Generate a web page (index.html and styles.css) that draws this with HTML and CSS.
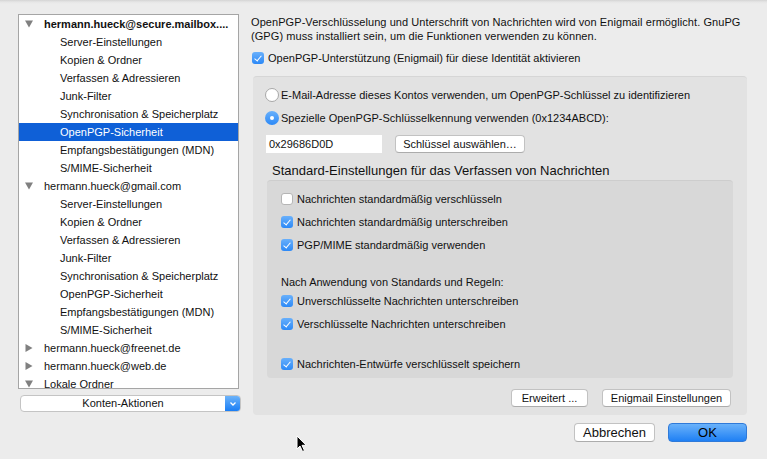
FILE: index.html
```html
<!DOCTYPE html>
<html lang="de">
<head>
<meta charset="utf-8">
<title>Konten-Einstellungen</title>
<link rel="stylesheet" href="styles.css">
</head>
<body>
<div class="window">
  <div class="left">
    <div class="tree">
      <div class="row acct bold"><span class="tri"><svg width="8" height="8" viewBox="0 0 8 8"><path d="M0 0.5 H8 L4 7.5 Z" fill="#808080"/></svg></span>hermann.hueck@secure.mailbox....</div>
      <div class="row sub">Server-Einstellungen</div>
      <div class="row sub">Kopien &amp; Ordner</div>
      <div class="row sub">Verfassen &amp; Adressieren</div>
      <div class="row sub">Junk-Filter</div>
      <div class="row sub">Synchronisation &amp; Speicherplatz</div>
      <div class="row sub sel">OpenPGP-Sicherheit</div>
      <div class="row sub">Empfangsbestätigungen (MDN)</div>
      <div class="row sub">S/MIME-Sicherheit</div>
      <div class="row acct"><span class="tri"><svg width="8" height="8" viewBox="0 0 8 8"><path d="M0 0.5 H8 L4 7.5 Z" fill="#808080"/></svg></span>hermann.hueck@gmail.com</div>
      <div class="row sub">Server-Einstellungen</div>
      <div class="row sub">Kopien &amp; Ordner</div>
      <div class="row sub">Verfassen &amp; Adressieren</div>
      <div class="row sub">Junk-Filter</div>
      <div class="row sub">Synchronisation &amp; Speicherplatz</div>
      <div class="row sub">OpenPGP-Sicherheit</div>
      <div class="row sub">Empfangsbestätigungen (MDN)</div>
      <div class="row sub">S/MIME-Sicherheit</div>
      <div class="row acct"><span class="tri"><svg width="8" height="8" viewBox="0 0 8 8"><path d="M0.5 0 V8 L7.5 4 Z" fill="#808080"/></svg></span>hermann.hueck@freenet.de</div>
      <div class="row acct"><span class="tri"><svg width="8" height="8" viewBox="0 0 8 8"><path d="M0.5 0 V8 L7.5 4 Z" fill="#808080"/></svg></span>hermann.hueck@web.de</div>
      <div class="row acct"><span class="tri"><svg width="8" height="8" viewBox="0 0 8 8"><path d="M0 0.5 H8 L4 7.5 Z" fill="#808080"/></svg></span>Lokale Ordner</div>
    </div>
    <div class="popup">
      <span class="popup-label">Konten-Aktionen</span>
      <span class="popup-arrow"><svg width="8" height="6" viewBox="0 0 8 6"><path d="M1.5 1.5 L4 4 L6.5 1.5" fill="none" stroke="#fff" stroke-width="1.3"/></svg></span>
    </div>
  </div>

  <div class="right">
    <p class="desc">OpenPGP-Verschlüsselung und Unterschrift von Nachrichten wird von Enigmail ermöglicht. GnuPG (GPG) muss installiert sein, um die Funktionen verwenden zu können.</p>
    <div class="check-row top-check"><span class="cb on"></span>OpenPGP-Unterstützung (Enigmail) für diese Identität aktivieren</div>

    <div class="outer">
      <div class="radio-row r1"><span class="radio"></span>E-Mail-Adresse dieses Kontos verwenden, um OpenPGP-Schlüssel zu identifizieren</div>
      <div class="radio-row r2"><span class="radio on"></span>Spezielle OpenPGP-Schlüsselkennung verwenden (0x1234ABCD):</div>
      <div class="key-row">
        <div class="input">0x29686D0D</div>
        <div class="btn">Schlüssel auswählen…</div>
      </div>
      <div class="section-title">Standard-Einstellungen für das Verfassen von Nachrichten</div>
      <div class="inner">
        <div class="check-row c1"><span class="cb"></span>Nachrichten standardmäßig verschlüsseln</div>
        <div class="check-row c2"><span class="cb on"></span>Nachrichten standardmäßig unterschreiben</div>
        <div class="check-row c2"><span class="cb on"></span>PGP/MIME standardmäßig verwenden</div>
        <div class="label-row">Nach Anwendung von Standards und Regeln:</div>
        <div class="check-row c3"><span class="cb on"></span>Unverschlüsselte Nachrichten unterschreiben</div>
        <div class="check-row c2"><span class="cb on"></span>Verschlüsselte Nachrichten unterschreiben</div>
        <div class="check-row c4"><span class="cb on"></span>Nachrichten-Entwürfe verschlüsselt speichern</div>
      </div>
      <div class="btn-row">
        <div class="btn b-erw">Erweitert ...</div>
        <div class="btn b-enig">Enigmail Einstellungen</div>
      </div>
    </div>

    <div class="dialog-row">
      <div class="btn dbtn">Abbrechen</div>
      <div class="btn dbtn ok">OK</div>
    </div>
  </div>
</div>
<svg class="cursor" width="12" height="18" viewBox="0 0 12 18"><path d="M1 1 L1 14 L4 11 L6.5 16.5 L8.5 15.6 L6 10.3 L10.2 10.3 Z" fill="#000" stroke="#fff" stroke-width="1"/></svg>
</body>
</html>
```
FILE: styles.css
```css
html, body {
  margin: 0;
  padding: 0;
}
body {
  width: 767px;
  height: 459px;
  overflow: hidden;
  background: #ececec;
  font-family: "Liberation Sans", Arial, sans-serif;
  font-size: 11px;
  color: #111;
  position: relative;
}
.window {
  display: flex;
  height: 459px;
  box-sizing: border-box;
  padding: 14px 0 0 18px;
  background: linear-gradient(#d4d4d4 0, #e6e6e6 2px, #ececec 4px, #ececec 100%);
}
.left {
  width: 223px;
  display: flex;
  flex-direction: column;
}
.tree {
  width: 221px;
  height: 375px;
  box-sizing: border-box;
  border: 1px solid #a5a5a5;
  background: #fff;
  overflow: hidden;
}
.row {
  height: 18px;
  line-height: 18px;
  white-space: nowrap;
  display: flex;
  align-items: center;
}
.acct { padding-left: 6px; }
.bold { font-weight: bold; }
.sub { padding-left: 41px; }
.sel { background: #0f60d7; color: #fff; }
.tri {
  width: 19px;
  height: 8px;
  flex: none;
  display: flex;
}
.popup {
  margin: 6px 0 0 2px;
  height: 17px;
  width: 221px;
  box-sizing: border-box;
  border: 1px solid #c4c4c4;
  border-radius: 4px;
  background: #fff;
  display: flex;
  overflow: hidden;
}
.popup-label {
  flex: 1;
  text-align: center;
  line-height: 15px;
  font-size: 11px;
}
.popup-arrow {
  width: 15px;
  background: linear-gradient(#6cb3fa, #1a7ef5);
  display: flex;
  align-items: center;
  justify-content: center;
}
.right {
  margin-left: 10px;
  width: 496px;
  display: flex;
  flex-direction: column;
}
.desc {
  margin: 1px 0 0 0;
  line-height: 14px;
  width: 496px;
  letter-spacing: 0.07px;
}
.check-row {
  display: flex;
  align-items: center;
  height: 14px;
  line-height: 14px;
  white-space: nowrap;
}
.top-check { margin: 8px 0 0 1px; }
.cb {
  width: 12px;
  height: 12px;
  box-sizing: border-box;
  border: 1px solid #b5b5b5;
  border-radius: 3px;
  background: #fff;
  margin-right: 4px;
  flex: none;
  position: relative;
}
.cb.on {
  border: none;
  background: linear-gradient(#69b0fb, #2c89f7);
}
.cb.on::after {
  content: "";
  position: absolute;
  left: 4px;
  top: 1.5px;
  width: 3px;
  height: 6px;
  border-right: 1.6px solid #fff;
  border-bottom: 1.6px solid #fff;
  transform: rotate(40deg);
}
.outer {
  margin: 11px 0 0 2px;
  width: 494px;
  height: 339px;
  box-sizing: border-box;
  background: #e2e2e2;
  border-radius: 4px;
  border-top: 1px solid #d6d6d6;
  display: flex;
  flex-direction: column;
}
.radio-row {
  display: flex;
  align-items: center;
  height: 14px;
  white-space: nowrap;
  padding-left: 12px;
}
.r1 { margin-top: 11px; }
.r2 { margin-top: 9px; }
.radio {
  width: 14px;
  height: 14px;
  box-sizing: border-box;
  border: 1px solid #a8a8a8;
  border-radius: 50%;
  background: #fff;
  margin-right: 2px;
  flex: none;
  position: relative;
}
.radio.on {
  border: none;
  background: linear-gradient(#69b0fb, #2c89f7);
}
.radio.on::after {
  content: "";
  position: absolute;
  left: 5px;
  top: 5px;
  width: 4px;
  height: 4px;
  border-radius: 50%;
  background: #fff;
}
.key-row {
  display: flex;
  align-items: center;
  margin: 10px 0 0 13px;
}
.input {
  width: 116px;
  height: 18px;
  line-height: 18px;
  background: #fff;
  padding-left: 3px;
  box-sizing: border-box;
  margin-right: 13px;
}
.btn {
  height: 18px;
  line-height: 16px;
  box-sizing: border-box;
  border: 1px solid #c2c2c2;
  border-bottom-color: #acacac;
  border-radius: 4px;
  background: #fff;
  text-align: center;
  white-space: nowrap;
}
.key-row .btn { width: 130px; margin-top: -1px; }
.section-title {
  margin: 9px 0 0 19px;
  font-size: 13px;
  height: 17px;
  line-height: 17px;
}
.inner {
  margin: 1px 0 0 14px;
  width: 466px;
  height: 198px;
  box-sizing: border-box;
  background: #d8d8d8;
  border-radius: 4px;
  border-top: 1px solid #cdcdcd;
  padding-left: 14px;
  display: flex;
  flex-direction: column;
}
.c1 { margin-top: 11px; }
.c2 { margin-top: 9px; }
.c3 { margin-top: 5px; }
.c4 { margin-top: 26px; }
.label-row {
  margin-top: 23px;
  height: 14px;
  line-height: 14px;
}
.btn-row {
  display: flex;
  justify-content: flex-end;
  margin: 11px 16px 0 0;
}
.b-erw { width: 77px; margin-right: 14px; }
.b-enig { width: 129px; }
.dialog-row {
  display: flex;
  justify-content: flex-end;
  margin: 8px 0 0 0;
}
.dbtn {
  width: 81px;
  height: 19px;
  line-height: 17px;
  font-size: 13px;
  margin-left: 13px;
}
.ok {
  width: 79px;
  border: 1px solid #2f7ad9;
  background: linear-gradient(#6ab2fa, #1f80f4);
  color: #000;
}
.cursor {
  position: absolute;
  left: 296px;
  top: 435px;
}
```
